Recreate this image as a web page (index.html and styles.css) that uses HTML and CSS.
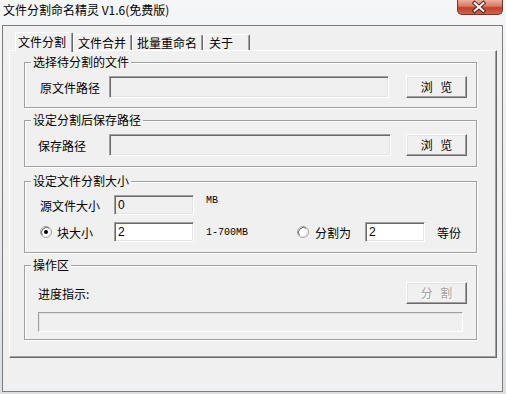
FILE: index.html
```html
<!DOCTYPE html>
<html lang="zh-CN">
<head>
<meta charset="utf-8">
<title>文件分割命名精灵 V1.6(免费版)</title>
<link rel="stylesheet" href="styles.css">
</head>
<body>
<div class="screen">
  <div class="titlebar">
    <span class="title">文件分割命名精灵 V1.6(免费版)</span>
    <span class="close">
      <svg width="46" height="15" viewBox="0 0 46 15">
        <path d="M18 3 L27 11 M27 3 L18 11" stroke="#5a2018" stroke-width="4" stroke-linecap="square" fill="none"/>
        <path d="M18 3 L27 11 M27 3 L18 11" stroke="#ffffff" stroke-width="2" stroke-linecap="square" fill="none"/>
      </svg>
    </span>
  </div>
  <div class="window">
    <div class="tabs">
      <div class="tab active t1">文件分割</div>
      <div class="tab t2">文件合并</div>
      <div class="tab t3">批量重命名</div>
      <div class="tab t4">关于</div>
    </div>
    <div class="panel">
      <div class="group g1">
        <div class="gtitle">选择待分割的文件</div>
        <div class="row">
          <span class="lbl">原文件路径</span>
          <span class="field ro w1"></span>
          <span class="btn">浏 览</span>
        </div>
      </div>
      <div class="group g2">
        <div class="gtitle">设定分割后保存路径</div>
        <div class="row">
          <span class="lbl lbl2">保存路径</span>
          <span class="field ro w2"></span>
          <span class="btn">浏 览</span>
        </div>
      </div>
      <div class="group g3">
        <div class="gtitle">设定文件分割大小</div>
        <div class="row small">
          <span class="lbl lbl3">源文件大小</span>
          <span class="field ro w3">0</span>
          <span class="unit unit-top">MB</span>
        </div>
        <div class="row small r2">
          <svg class="radio" width="12" height="12" viewBox="0 0 12 12">
            <circle cx="6" cy="6" r="5.5" fill="#fff" stroke="#a0a0a0"/>
            <path d="M2.5 9.5 A5 5 0 0 1 9.5 2.5" stroke="#696969" stroke-width="1" fill="none"/>
            <path d="M9.5 2.5 A5 5 0 0 1 2.5 9.5" stroke="#e3e3e3" stroke-width="1" fill="none"/>
            <circle cx="6" cy="6" r="2" fill="#000"/>
          </svg>
          <span class="rlbl">块大小</span>
          <span class="field w3">2</span>
          <span class="unit unit-range">1-700MB</span>
          <svg class="radio" width="12" height="12" viewBox="0 0 12 12">
            <circle cx="6" cy="6" r="5.5" fill="#fff" stroke="#a0a0a0"/>
            <path d="M2.5 9.5 A5 5 0 0 1 9.5 2.5" stroke="#696969" stroke-width="1" fill="none"/>
            <path d="M9.5 2.5 A5 5 0 0 1 2.5 9.5" stroke="#e3e3e3" stroke-width="1" fill="none"/>
          </svg>
          <span class="rlbl rlbl2">分割为</span>
          <span class="field w4">2</span>
          <span class="parts">等份</span>
        </div>
      </div>
      <div class="group g4">
        <div class="gtitle">操作区</div>
        <div class="row r4">
          <span class="lbl lbl2">进度指示:</span>
          <span class="btn disabled">分 割</span>
        </div>
        <div class="progress"></div>
      </div>
    </div>
  </div>
</div>
</body>
</html>
```
FILE: styles.css
```css
* { box-sizing: border-box; }
html, body { margin: 0; padding: 0; }
body {
  font-family: "Noto Sans CJK SC", "Liberation Sans", sans-serif;
  font-size: 12px;
  color: #000;
}
.screen {
  width: 506px;
  height: 394px;
  overflow: hidden;
  background: linear-gradient(180deg, #f5f6f7 0%, #eceef0 40%, #dde0e3 100%);
}
.titlebar {
  height: 25px;
  display: flex;
  justify-content: space-between;
  align-items: flex-start;
}
.title {
  margin-left: 3px;
  line-height: 20px;
  font-size: 12px;
  color: #000;
}
.close {
  width: 46px;
  height: 15px;
  margin-right: 3px;
  border: 1px solid #7e3226;
  border-top: none;
  border-radius: 0 0 5px 5px;
  background: linear-gradient(180deg, #eab0a2 0%, #d9785f 45%, #c2412a 55%, #d4624a 100%);
  display: flex;
  overflow: hidden;
}
.close svg { display: block; margin-left: -1px; }
.window {
  margin-left: 2px;
  width: 501px;
  height: 367px;
  border: 1px solid #7c7c7c;
  background: #f0f0f0;
  padding: 6px 0 0 6px;
}
.tabs {
  display: flex;
  align-items: flex-end;
  height: 18px;
  margin-left: 6px;
}
.tab {
  height: 16px;
  line-height: 16px;
  padding-left: 4px;
  border-left: 1px solid #fff;
  border-top: 1px solid #fff;
  border-right: 1px solid #696969;
  box-shadow: inset -1px 0 #a0a0a0;
  border-radius: 2px 2px 0 0;
  background: #f0f0f0;
  white-space: nowrap;
}
.tab.active {
  height: 20px;
  margin-bottom: -2px;
  line-height: 17px;
  padding-left: 2px;
  position: relative;
  z-index: 1;
}
.t1 { width: 58px; }
.t2 { width: 59px; }
.t3 { width: 71px; }
.t4 { width: 47px; padding-left: 5px; }
.panel {
  width: 488px;
  height: 308px;
  border: 1px solid;
  border-color: #fff #696969 #696969 #fff;
  box-shadow: inset -1px -1px #a0a0a0;
  padding: 11px 0 0 14px;
}
.group {
  width: 453px;
  border: 1px solid #a0a0a0;
  box-shadow: 1px 1px #fff, inset 1px 1px #fff;
}
.g1 { height: 46px; }
.g2 { height: 47px; margin-top: 12px; }
.g3 { height: 72px; margin-top: 14px; }
.g4 { height: 75px; margin-top: 12px; }
.gtitle {
  width: max-content;
  height: 14px;
  line-height: 14px;
  margin: -8px 0 0 6px;
  padding: 0 2px;
  background: #f0f0f0;
}
.row {
  display: flex;
  align-items: center;
  height: 22px;
  margin-top: 7px;
}
.row.small { height: 20px; }
.row.r2 { margin-top: 7px; }
.row.r4 { margin-top: 10px; }
.lbl {
  width: 84px;
  padding-left: 15px;
  white-space: nowrap;
}
.lbl2 { padding-left: 13px; }
.lbl3 { width: 89px; }
.field {
  height: 100%;
  border: 1px solid;
  border-color: #a0a0a0 #fff #fff #a0a0a0;
  box-shadow: inset 1px 1px #696969, inset -1px -1px #e3e3e3;
  background: #fff;
  padding-left: 3px;
  font-family: "Liberation Sans", "Noto Sans CJK SC", sans-serif;
  font-size: 12px;
  line-height: 18px;
}
.field.ro { background: #f0f0f0; }
.w1 { width: 280px; }
.w2 { width: 282px; }
.w3 { width: 80px; }
.w4 { width: 60px; }
.btn {
  width: 61px;
  height: 22px;
  margin-left: auto;
  margin-right: 9px;
  border: 1px solid;
  border-color: #fff #696969 #696969 #fff;
  box-shadow: inset -1px -1px #a0a0a0, inset 1px 1px #e3e3e3;
  background: #f0f0f0;
  text-align: center;
  line-height: 19px;
  white-space: pre;
  word-spacing: 5px;
}
.btn.disabled {
  color: #a0a0a0;
  text-shadow: 1px 1px #fff;
}
.unit {
  font-family: "Liberation Mono", "DejaVu Sans Mono", monospace;
  font-size: 10px;
  margin-left: 12px;
}
.unit-top {
  align-self: flex-start;
  line-height: 10px;
  margin-top: 1px;
}
.unit-range { width: 91px; }
.radio {
  display: block;
  margin-left: 15px;
  flex: none;
}
.unit-range + .radio { margin-left: 0; }
.rlbl {
  width: 62px;
  padding-left: 5px;
  white-space: nowrap;
}
.rlbl2 { width: 56px; padding-left: 6px; }
.parts { margin-left: 12px; }
.progress {
  width: 425px;
  height: 20px;
  margin: 8px 0 0 13px;
  border: 1px solid;
  border-color: #a0a0a0 #fff #fff #a0a0a0;
  box-shadow: inset 1px 1px #e3e3e3;
}
```
